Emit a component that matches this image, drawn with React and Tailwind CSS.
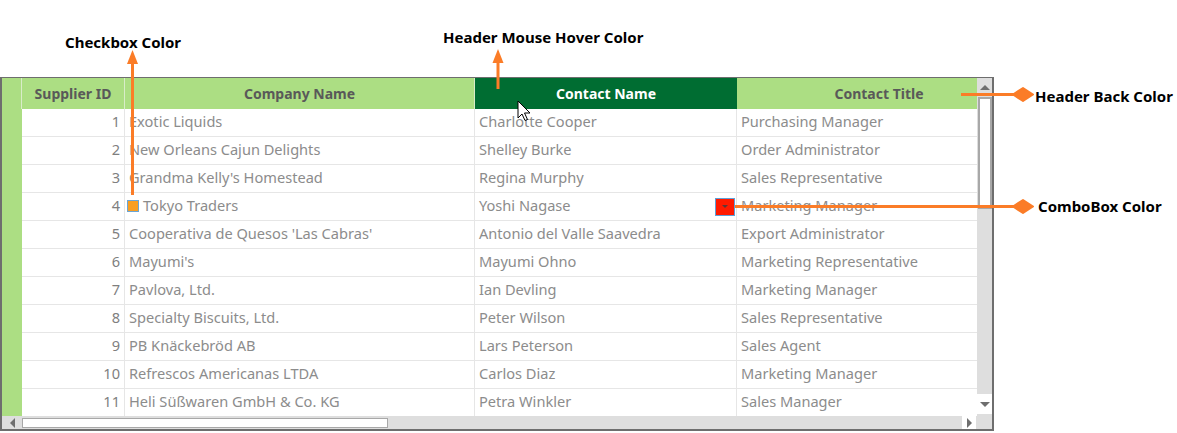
const rows = [
  [1, 'Exotic Liquids', 'Charlotte Cooper', 'Purchasing Manager'],
  [2, 'New Orleans Cajun Delights', 'Shelley Burke', 'Order Administrator'],
  [3, "Grandma Kelly's Homestead", 'Regina Murphy', 'Sales Representative'],
  [4, 'Tokyo Traders', 'Yoshi Nagase', 'Marketing Manager'],
  [5, "Cooperativa de Quesos 'Las Cabras'", 'Antonio del Valle Saavedra', 'Export Administrator'],
  [6, "Mayumi's", 'Mayumi Ohno', 'Marketing Representative'],
  [7, 'Pavlova, Ltd.', 'Ian Devling', 'Marketing Manager'],
  [8, 'Specialty Biscuits, Ltd.', 'Peter Wilson', 'Sales Representative'],
  [9, 'PB Knäckebröd AB', 'Lars Peterson', 'Sales Agent'],
  [10, 'Refrescos Americanas LTDA', 'Carlos Diaz', 'Marketing Manager'],
  [11, 'Heli Süßwaren GmbH & Co. KG', 'Petra Winkler', 'Sales Manager'],
];

const ORANGE = '#fb7c27';

function Header() {
  return (
    <div className="flex h-[31px] shrink-0 font-bold text-[14px] text-[#595959]">
      <div className="w-[20px] shrink-0 bg-[#acde83] border-r border-[#d9ecc9]" />
      <div className="w-[103px] shrink-0 bg-[#acde83] border-r border-[#d9ecc9] flex items-center justify-center pb-[1px]">Supplier ID</div>
      <div className="w-[350px] shrink-0 bg-[#acde83] border-r border-[#d9ecc9] flex items-center justify-center pb-[1px]">Company Name</div>
      <div className="w-[262px] shrink-0 bg-[#006d32] text-white flex items-center justify-center pb-[1px]">Contact Name</div>
      <div className="w-[284px] shrink-0 bg-[#acde83] flex items-center justify-center pb-[1px]">Contact Title</div>
    </div>
  );
}

function Row({ r }) {
  const [id, company, contact, title] = r;
  const special = id === 4;
  return (
    <div className="flex h-[28px] shrink-0 text-[14.6px] text-[#8c8c8c]">
      <div className="w-[20px] shrink-0 bg-[#acde83]" />
      <div className="w-[103px] shrink-0 border-r border-b border-[#e6e6e6] flex items-center justify-end pr-[4px] pb-[2px] text-[#7f7f7f]">{id}</div>
      <div className="w-[350px] shrink-0 border-r border-b border-[#e6e6e6] flex items-center pl-[4px] pb-[2px] whitespace-nowrap">
        {special && (
          <span className="w-[12px] h-[12px] bg-[#f89e22] border border-[#6aa5d6] ml-[-2px] mr-[4px]" />
        )}
        {company}
      </div>
      <div className="w-[262px] shrink-0 border-r border-b border-[#e6e6e6] flex items-center pl-[4px] pb-[2px] whitespace-nowrap">
        {contact}
        {special && (
          <span className="ml-auto mr-[1px] mt-[2px] w-[20px] h-[18px] bg-[#ff1a00] border border-[#5e9fd8] flex items-center justify-center">
            <span className="w-0 h-0 border-x-[3px] border-x-transparent border-t-[3px] border-t-[#5a3a3a]" />
          </span>
        )}
      </div>
      <div className="w-[284px] shrink-0 border-b border-[#e6e6e6] flex items-center pl-[4px] pb-[2px] whitespace-nowrap">{title}</div>
    </div>
  );
}

function Tri({ dir }) {
  const cls = {
    up: 'border-x-[5px] border-x-transparent border-b-[5px] border-b-[#6e6e6e]',
    down: 'border-x-[5px] border-x-transparent border-t-[5px] border-t-[#6e6e6e]',
    left: 'border-y-[5px] border-y-transparent border-r-[5px] border-r-[#6e6e6e]',
    right: 'border-y-[5px] border-y-transparent border-l-[5px] border-l-[#6e6e6e]',
  }[dir];
  return <span className={`w-0 h-0 ${cls}`} />;
}

function Grid() {
  return (
    <div className="w-[994px] h-[354px] border-x-2 border-b-2 border-t border-[#6e6e6e] flex flex-col bg-white">
      <div className="flex flex-1 min-h-0">
        <div className="w-[975px] overflow-hidden flex flex-col">
          <Header />
          {rows.map((r) => (
            <Row key={r[0]} r={r} />
          ))}
        </div>
        <div className="w-[15px] bg-[#dedede] flex flex-col items-center">
          <div className="h-[18px] w-full flex items-center justify-center">
            <Tri dir="up" />
          </div>
          <div className="w-[14px] h-[112px] mt-[1px] bg-white border-2 border-[#a8a8a8]" />
          <div className="flex-1" />
          <div className="h-[20px] w-[15px] bg-white flex items-center justify-center mb-[2px]">
            <Tri dir="down" />
          </div>
        </div>
      </div>
      <div className="h-[13px] bg-[#dedede] flex items-center">
        <div className="w-[20px] h-full flex items-center justify-center">
          <Tri dir="left" />
        </div>
        <div className="w-[366px] h-[10px] bg-white border border-[#a8a8a8]" />
        <div className="flex-1" />
        <div className="w-[14px] h-full bg-white flex items-center justify-center mr-[16px]">
          <Tri dir="right" />
        </div>
      </div>
    </div>
  );
}

export default function App() {
  return (
    <div className="relative w-[1177px] h-[433px] bg-white overflow-hidden" style={{ fontFamily: '"Noto Sans", "Open Sans", sans-serif' }}>
      <div className="pt-[77px]">
        <Grid />
      </div>

      {/* Annotation labels */}
      <div className="absolute left-[65px] top-[31px] text-[15px] font-bold text-black leading-[22px]">Checkbox Color</div>
      <div className="absolute left-[443px] top-[26px] text-[15px] font-bold text-black leading-[22px]">Header Mouse Hover Color</div>
      <div className="absolute left-[1035px] top-[85px] text-[15px] font-bold text-black leading-[22px]">Header Back Color</div>
      <div className="absolute left-[1038px] top-[195px] text-[15px] font-bold text-black leading-[22px]">ComboBox Color</div>

      {/* Arrows, pointers and cursor */}
      <svg className="absolute inset-0 pointer-events-none" width="1177" height="433" viewBox="0 0 1177 433">
        <line x1="132.5" y1="60" x2="132.5" y2="195" stroke={ORANGE} strokeWidth="3" />
        <polygon points="127,64 132.5,50 138,64" fill={ORANGE} />
        <line x1="498" y1="60" x2="498" y2="89" stroke={ORANGE} strokeWidth="3" />
        <polygon points="492.5,63 498,49 503.5,63" fill={ORANGE} />
        <line x1="961" y1="94.5" x2="1016" y2="94.5" stroke={ORANGE} strokeWidth="3" />
        <polygon points="1013,94.5 1023,88 1033,94.5 1023,101" fill={ORANGE} stroke={ORANGE} strokeWidth="2" strokeLinejoin="round" />
        <line x1="735" y1="206.5" x2="1016" y2="206.5" stroke={ORANGE} strokeWidth="3" />
        <polygon points="1013,206.5 1023,200 1033,206.5 1023,213" fill={ORANGE} stroke={ORANGE} strokeWidth="2" strokeLinejoin="round" />
        <path d="M518 101 L518 118 L522 114 L525 120.5 L527.5 119.5 L524.5 113 L530 113 Z" fill="#fff" stroke="#000" strokeWidth="1" strokeLinejoin="round" />
      </svg>
    </div>
  );
}
